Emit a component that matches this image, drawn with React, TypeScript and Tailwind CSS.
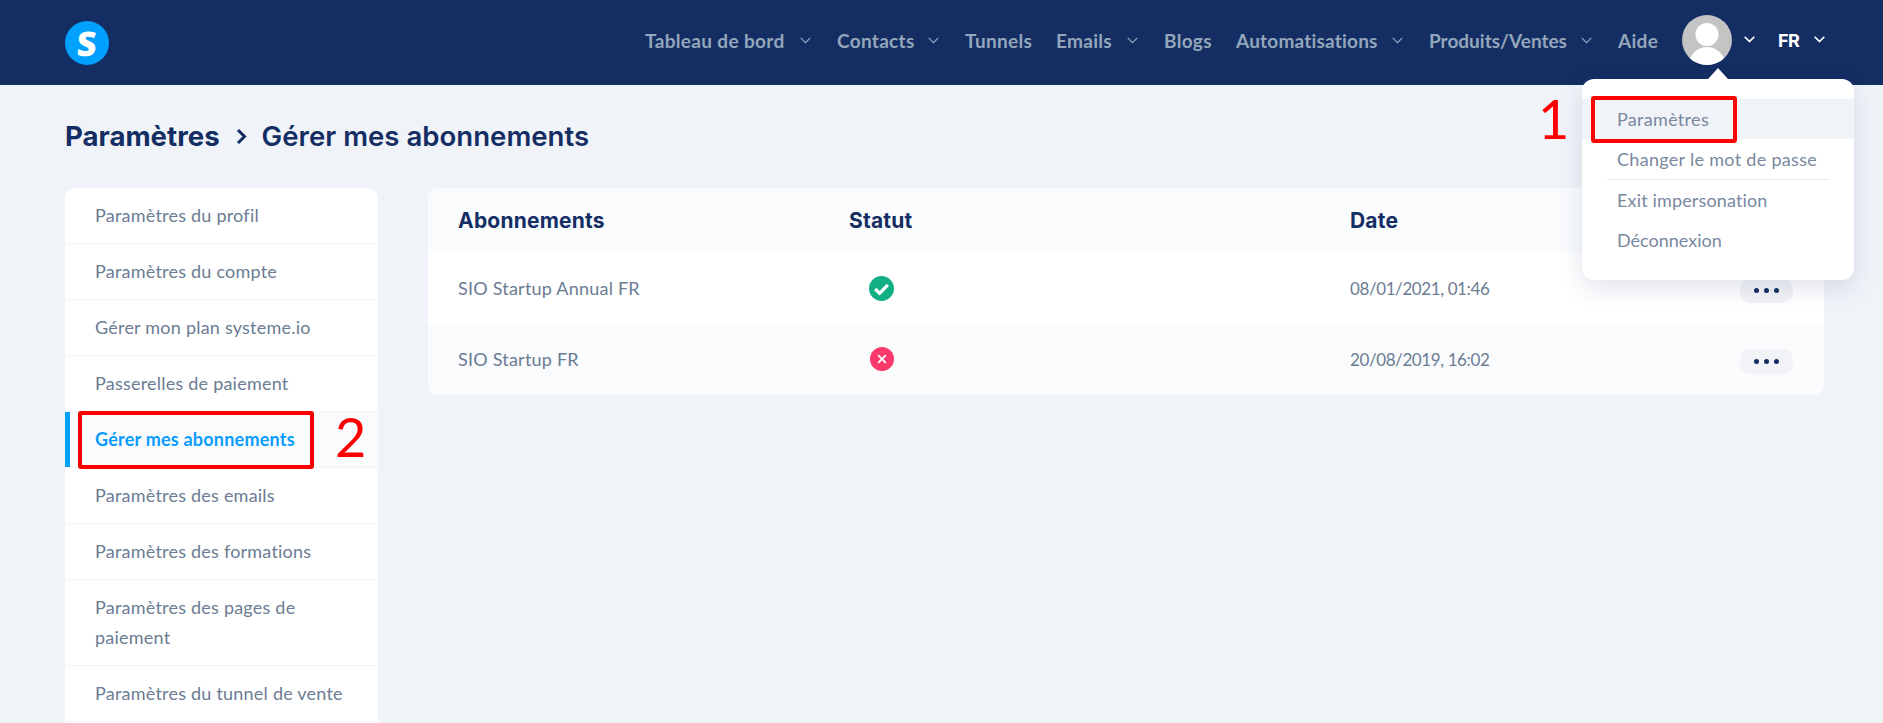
const body = "[font-family:Lato,sans-serif]";
const head = "[font-family:Inter,sans-serif]";

function Chevron({ white }: { white?: boolean }) {
  return (
    <svg width="11" height="7" viewBox="0 0 11 7" fill="none" className={white ? "text-white" : "text-[#93A6BB]"}>
      <path d="M0.7 0.8 L5.5 5.6 L10.3 0.8" stroke="currentColor" strokeWidth={white ? 1.6 : 1.2} />
    </svg>
  );
}

const nav: { label: string; w: number; ml: string; chev?: boolean; track: string }[] = [
  { label: "Tableau de bord", w: 140, ml: "ml-0", chev: true, track: "tracking-[0.35px]" },
  { label: "Contacts", w: 76, ml: "ml-[26px]", chev: true, track: "tracking-[0.3px]" },
  { label: "Tunnels", w: 66, ml: "ml-[26px]", track: "tracking-[0.3px]" },
  { label: "Emails", w: 56, ml: "ml-[25px]", chev: true, track: "tracking-[0.3px]" },
  { label: "Blogs", w: 46, ml: "ml-[26px]", track: "tracking-[0.3px]" },
  { label: "Automatisations", w: 141, ml: "ml-[26px]", chev: true, track: "tracking-[0.2px]" },
  { label: "Produits/Ventes", w: 137, ml: "ml-[26px]", chev: true, track: "tracking-[0px]" },
  { label: "Aide", w: 38, ml: "ml-[26px]", track: "tracking-[0.3px]" },
];

const side = [
  "Paramètres du profil",
  "Paramètres du compte",
  "Gérer mon plan systeme.io",
  "Passerelles de paiement",
  "Gérer mes abonnements",
  "Paramètres des emails",
  "Paramètres des formations",
  "Paramètres des pages de paiement",
  "Paramètres du tunnel de vente",
];

function Dots() {
  return (
    <div className="mt-[4px] w-[53px] h-[25px] rounded-[10px] bg-[#F2F3F6] flex items-center justify-center gap-[5px]">
      <span className="size-[5px] rounded-full bg-[#142E64]" />
      <span className="size-[5px] rounded-full bg-[#142E64]" />
      <span className="size-[5px] rounded-full bg-[#142E64]" />
    </div>
  );
}

function Row({ name, date, ok, alt }: { name: string; date: string; ok?: boolean; alt?: boolean }) {
  return (
    <div className={`h-[71px] flex items-center pl-[30px] pr-[31px] ${alt ? "bg-[#F9FBFD]" : "bg-white"}`}>
      <div className="w-[391px] text-[18px] tracking-[0.22px] text-[#6B7C93]">{name}</div>
      <div className="w-[501px] pl-[20px]">
        {ok ? (
          <svg width="25" height="25" viewBox="0 0 25 25" className="-mt-[1px]">
            <circle cx="12.5" cy="12.5" r="12.5" fill="#12AF84" />
            <path d="M6.2 13 L10.6 17.3 L18.8 8.8" stroke="#fff" strokeWidth="3.2" fill="none" />
          </svg>
        ) : (
          <svg width="24" height="24" viewBox="0 0 24 24" className="ml-[1px] -mt-[1px]">
            <circle cx="12" cy="12" r="12" fill="#F93A6A" />
            <path d="M8.2 8.2 L15.8 15.8 M15.8 8.2 L8.2 15.8" stroke="#fff" strokeWidth="1.9" fill="none" />
          </svg>
        )}
      </div>
      <div className="flex-1 text-[17px] tracking-[-0.4px] text-[#6B7C93]">{date}</div>
      <Dots />
    </div>
  );
}

export default function App() {
  return (
    <div className={`relative h-[723px] w-[1883px] overflow-hidden bg-[#F0F4F9] ${body}`}>
      <header className="h-[85px] bg-[#142E64] flex items-center pl-[65px] pr-[58px]">
        <div className="size-[44px] rounded-full bg-[#00A0FF] flex items-center justify-center text-white text-[34px] font-extrabold leading-none [font-family:'Open_Sans',sans-serif]">
          <span className="-skew-x-3">S</span>
        </div>
        <nav className="ml-auto -mt-[5px] flex items-center">
          {nav.map((n) => (
            <div key={n.label} className={`flex items-center ${n.ml}`}>
              <span className={`mt-[2px] text-[19px] font-bold text-[#93A6BB] whitespace-nowrap ${n.track}`} style={{ width: n.w }}>
                {n.label}
              </span>
              {n.chev && (
                <span className="ml-[15px] flex">
                  <Chevron />
                </span>
              )}
            </div>
          ))}
          <svg width="50" height="50" viewBox="0 0 50 50" className="ml-[26px]">
            <defs>
              <clipPath id="av">
                <circle cx="25" cy="25" r="25" />
              </clipPath>
            </defs>
            <circle cx="25" cy="25" r="25" fill="#C4C4C4" />
            <g clipPath="url(#av)" fill="#fff">
              <circle cx="25" cy="19.5" r="11.5" />
              <ellipse cx="25" cy="50" rx="18" ry="18" />
            </g>
          </svg>
          <span className="ml-[12px] -mt-[2px] flex">
            <Chevron white />
          </span>
          <span className={`ml-[23px] w-[22px] text-[18px] font-bold tracking-[-0.5px] text-white ${head}`}>FR</span>
          <span className="ml-[14px] -mt-[2px] flex">
            <Chevron white />
          </span>
        </nav>
      </header>

      <main className="px-[65px] pr-[59px]">
        <h1 className={`h-[103px] flex items-center text-[27.6px] text-[#142E64] ${head}`}>
          <span className="font-bold">Paramètres</span>
          <svg width="11" height="17" viewBox="0 0 11 17" className="ml-[16px] mr-[15px]">
            <path d="M2 2 L8.5 8.5 L2 15" stroke="#142E64" strokeWidth="3" fill="none" />
          </svg>
          <span className="font-semibold">Gérer mes abonnements</span>
        </h1>

        <div className="flex items-start gap-[50px]">
          <aside className="w-[313px] shrink-0 bg-white rounded-t-[10px] text-[18px] text-[#6B7C93] pb-[20px]">
            {side.map((s) => {
              const active = s === "Gérer mes abonnements";
              return (
                <div
                  key={s}
                  className={`relative pl-[30px] pr-[20px] pt-[12px] pb-[13px] border-b border-[#F2F4F8] leading-[30px] tracking-[0.22px] ${
                    active ? "bg-[#F9FBFD] font-bold text-[#0A9BFF]" : ""
                  }`}
                >
                  {active && <span className="absolute left-0 top-0 bottom-0 w-[5px] bg-[#00A0FF]" />}
                  {s}
                </div>
              );
            })}
          </aside>

          <section className="flex-1 rounded-[10px] overflow-hidden">
            <div className={`h-[65px] flex items-center pl-[30px] bg-[#F9FBFD] text-[21px] font-bold text-[#142E64] tracking-[0.2px] ${head}`}>
              <span className="w-[391px]">Abonnements</span>
              <span className="w-[501px]">Statut</span>
              <span>Date</span>
            </div>
            <Row name="SIO Startup Annual FR" date="08/01/2021, 01:46" ok />
            <Row name="SIO Startup FR" date="20/08/2019, 16:02" alt />
          </section>
        </div>
      </main>

      {/* account dropdown */}
      <div className="absolute left-[1582px] top-[79px] w-[272px] h-[201px] rounded-[12px] bg-white shadow-[0_8px_24px_rgba(20,46,100,0.13)] pt-[20px] text-[18px] tracking-[0.3px] text-[#7A889E]">
        <span className="absolute left-[126px] -top-[11px] w-0 h-0 border-x-[10px] border-x-transparent border-b-[11px] border-b-white" />
        <div className="h-[40px] flex items-center pl-[35px] bg-[#F0F4F9]">Paramètres</div>
        <div className="h-[40px] flex items-center pl-[35px]">Changer le mot de passe</div>
        <div className="mx-[25px] border-t border-[#E8EBF0]" />
        <div className="h-[41px] flex items-center pl-[35px] tracking-[0.15px]">Exit impersonation</div>
        <div className="h-[38px] flex items-center pl-[35px] tracking-[0px]">Déconnexion</div>
      </div>

      {/* red annotations */}
      <div className="absolute left-[1591px] top-[96px] w-[146px] h-[47px] border-[4px] border-[#FF0000] rounded-[3px]" />
      <div className="absolute left-[78px] top-[411px] w-[236px] h-[58px] border-[4px] border-[#FF0000] rounded-[3px]" />
      <div className="absolute left-[1538px] top-[84px] text-[54px] leading-[70px] text-[#FF0000]">1</div>
      <div className="absolute left-[335px] top-[402px] text-[54px] leading-[70px] text-[#FF0000]">2</div>
    </div>
  );
}
